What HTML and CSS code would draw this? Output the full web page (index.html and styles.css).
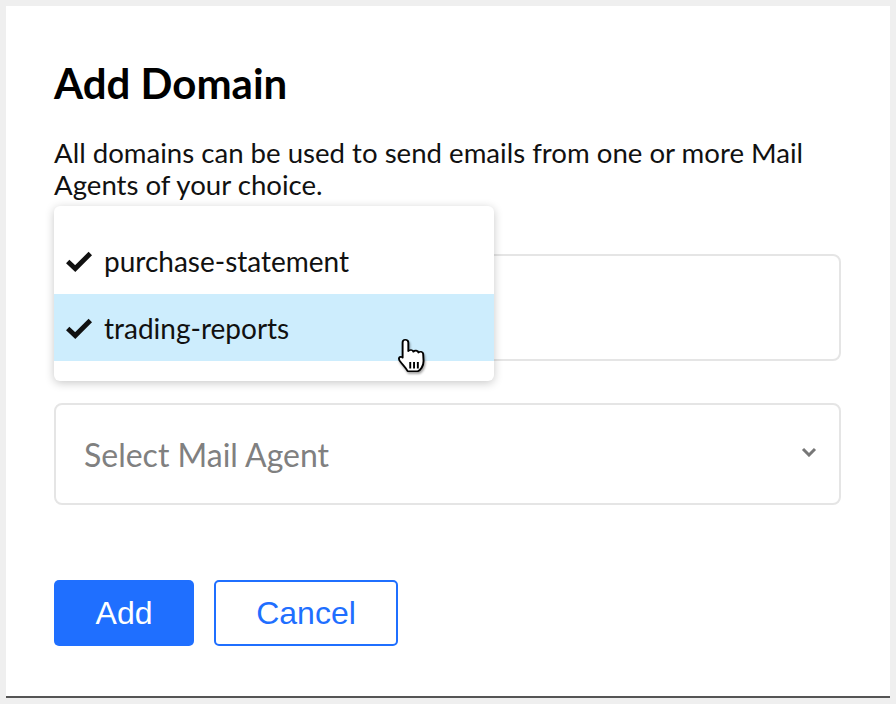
FILE: index.html
```html
<!DOCTYPE html>
<html>
<head>
<meta charset="utf-8">
<link rel="stylesheet" href="styles.css">
</head>
<body>
<div class="card">
  <h1 class="title">Add Domain</h1>
  <p class="desc">All domains can be used to send emails from one or more Mail Agents of your choice.</p>
  <div class="fields">
    <div class="input"></div>
    <div class="select">
      <span class="placeholder">Select Mail Agent</span>
      <svg class="chev" width="16" height="10" viewBox="0 0 16 10"><path d="M2 2 L8 8 L14 2" fill="none" stroke="#777" stroke-width="3"/></svg>
    </div>
    <div class="menu">
      <div class="item"><svg class="check" width="28" height="22" viewBox="0 0 26 20"><path d="M2.5 10.5 L9.5 17 L23.5 3" fill="none" stroke="#111" stroke-width="4.5"/></svg><span>purchase-statement</span></div>
      <div class="item active"><svg class="check" width="28" height="22" viewBox="0 0 26 20"><path d="M2.5 10.5 L9.5 17 L23.5 3" fill="none" stroke="#111" stroke-width="4.5"/></svg><span>trading-reports</span></div>
      <svg class="cursor" width="33" height="37" viewBox="0 0 26 34" preserveAspectRatio="none"><path d="M8 2.5 C9.8 2.5 10.5 3.5 10.5 5 L10.5 13 C11.5 11.5 14 11.5 14.5 13.5 C15.5 12 18 12.2 18.5 14.3 C19.5 13 22 13.3 22.2 15.5 L22.5 22 C22.5 27 20 30.5 18 31.5 L10 31.5 C8.5 28 5.5 25 3.5 21.5 C2.5 19.5 3.5 17.5 5.5 18.5 L6 19 L6 5 C6 3.5 6.5 2.5 8 2.5 Z" fill="#fff" stroke="#000" stroke-width="1.5" stroke-linejoin="round"/><path d="M12 23 L12 29 M15 23 L15 29 M18 23 L18 29" stroke="#000" stroke-width="1.5"/></svg>
    </div>
  </div>
  <div class="actions">
    <button class="btn primary">Add</button>
    <button class="btn secondary">Cancel</button>
  </div>
</div>
</body>
</html>
```
FILE: styles.css
```css
html, body {
  margin: 0;
  padding: 0;
  background: #efefef;
}
body {
  padding: 6px 6px 0 6px;
  height: 704px;
  box-sizing: border-box;
  overflow: hidden;
}
.card {
  background: #fff;
  width: 884px;
  height: 692px;
  box-sizing: border-box;
  border-bottom: 2px solid #555;
  padding: 0 48px;
  font-family: Lato, "Open Sans", sans-serif;
  color: #111;
}
.title {
  margin: 0;
  padding-top: 53px;
  font-size: 42px;
  line-height: 48px;
  font-weight: 700;
  color: #000;
}
.desc {
  margin: 30px 0 0 0;
  font-size: 27.6px;
  line-height: 32px;
  width: 780px;
}
.fields {
  position: relative;
  margin-top: 53px;
  width: 787px;
}
.input {
  height: 107px;
  box-sizing: border-box;
  border: 2px solid #e5e5e5;
  border-radius: 8px;
}
.select {
  margin-top: 42px;
  height: 102px;
  box-sizing: border-box;
  border: 2px solid #e5e5e5;
  border-radius: 8px;
  display: flex;
  align-items: center;
  justify-content: space-between;
  padding: 0 22px 0 28px;
}
.placeholder {
  font-size: 32px;
  color: #808080;
}
.chev {
  margin-top: -4px;
}
.menu {
  position: absolute;
  left: 0;
  top: -48px;
  width: 440px;
  box-sizing: border-box;
  padding: 21px 0 20px 0;
  background: #fff;
  border-radius: 6px;
  box-shadow: 0 2px 10px rgba(0,0,0,0.22);
}
.item {
  height: 67px;
  display: flex;
  align-items: center;
  padding-left: 11px;
  font-size: 28px;
  color: #111;
}
.item.active {
  background: #cdedfd;
}
.check {
  margin-right: 11px;
}
.cursor {
  position: absolute;
  left: 341px;
  top: 131px;
  filter: drop-shadow(1px 2px 1px rgba(0,0,0,0.35));
}
.actions {
  display: flex;
  gap: 20px;
  margin-top: 75px;
}
.btn {
  height: 66px;
  border-radius: 5px;
  font-family: "Liberation Sans", Arial, sans-serif;
  font-size: 32px;
  padding: 0;
  cursor: pointer;
}
.primary {
  width: 140px;
  background: #1f6fff;
  color: #fff;
  border: none;
}
.secondary {
  width: 184px;
  background: #fff;
  color: #1f6fff;
  border: 2px solid #1f6fff;
}
```
